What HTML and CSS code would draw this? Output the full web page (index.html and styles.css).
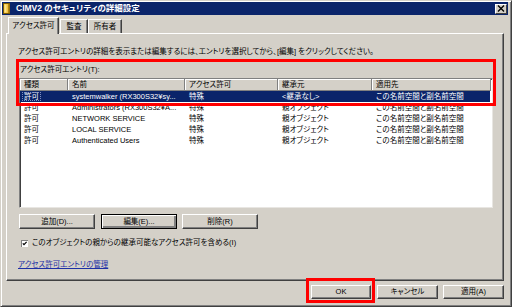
FILE: index.html
```html
<!DOCTYPE html>
<html lang="ja">
<head>
<meta charset="utf-8">
<title>CIMV2 のセキュリティの詳細設定</title>
<link rel="stylesheet" href="styles.css">
</head>
<body>
<div class="window">
  <div class="titlebar">
    <svg class="ticon" width="8" height="11" viewBox="0 0 8 11">
      <rect x="0.5" y="0.5" width="6" height="10" fill="#f3c13a" stroke="#7a5a00"/>
      <rect x="1.5" y="1.5" width="2" height="8" fill="#fbe38a"/>
      <rect x="5" y="1" width="1.5" height="9" fill="#b08418"/>
    </svg>
    <span class="title">CIMV2 のセキュリティの詳細設定</span>
    <span class="close">
      <svg width="8" height="7" viewBox="0 0 8 7"><path d="M1 0.5 L7 6.5 M7 0.5 L1 6.5" stroke="#000" stroke-width="1.4"/></svg>
    </span>
  </div>

  <div class="tabs">
    <div class="tab active">アクセス許可</div>
    <div class="tab t2">監査</div>
    <div class="tab t3">所有者</div>
  </div>

  <div class="panel">
    <p class="desc">アクセス許可エントリの詳細を表示または編集するには、エントリを選択してから、[編集] をクリックしてください。</p>
    <div class="label">アクセス許可エントリ(T):</div>
    <div class="list">
      <div class="row head">
        <span>種類</span><span>名前</span><span>アクセス許可</span><span>継承元</span><span>適用先</span>
      </div>
      <div class="row sel">
        <span><i class="focus">許可</i></span><span>systemwalker (RX300S32¥sy...</span><span>特殊</span><span>&lt;継承なし&gt;</span><span>この名前空間と副名前空間</span>
      </div>
      <div class="row">
        <span>許可</span><span>Administrators (RX300S32¥A...</span><span>特殊</span><span>親オブジェクト</span><span>この名前空間と副名前空間</span>
      </div>
      <div class="row">
        <span>許可</span><span>NETWORK SERVICE</span><span>特殊</span><span>親オブジェクト</span><span>この名前空間と副名前空間</span>
      </div>
      <div class="row">
        <span>許可</span><span>LOCAL SERVICE</span><span>特殊</span><span>親オブジェクト</span><span>この名前空間と副名前空間</span>
      </div>
      <div class="row">
        <span>許可</span><span>Authenticated Users</span><span>特殊</span><span>親オブジェクト</span><span>この名前空間と副名前空間</span>
      </div>
    </div>
    <div class="btnrow">
      <button class="btn">追加(D)...</button>
      <button class="btn default">編集(E)...</button>
      <button class="btn">削除(R)</button>
    </div>
    <div class="check">
      <svg width="7" height="7" viewBox="0 0 7 7">
        <rect x="0" y="0" width="7" height="7" fill="#808080"/>
        <rect x="1" y="1" width="6" height="6" fill="#fff"/>
        <path d="M1.8 3.3 L3 4.6 L5.6 1.9" stroke="#000" stroke-width="1.2" fill="none"/>
      </svg>
      <span>このオブジェクトの親からの継承可能なアクセス許可を含める(I)</span>
    </div>
    <a class="link">アクセス許可エントリの管理</a>
    <div class="mark mark-entries"></div>
  </div>

  <div class="footer">
    <div class="okwrap">
      <button class="btn fbtn">OK</button>
      <div class="mark mark-ok"></div>
    </div>
    <button class="btn fbtn">キャンセル</button>
    <button class="btn fbtn">適用(A)</button>
  </div>
</div>
</body>
</html>
```

FILE: styles.css
```css
* { box-sizing: border-box; }
html, body { margin: 0; padding: 0; }
body {
  width: 512px;
  height: 307px;
  overflow: hidden;
  background: #d4d0c8;
  font-family: "Liberation Sans", "Noto Sans CJK JP", sans-serif;
  font-size: 7.5px;
  color: #000;
  font-feature-settings: "palt";
}

.window {
  width: 512px;
  height: 307px;
  border: 1px solid;
  border-color: #d4d0c8 #404040 #404040 #d4d0c8;
  box-shadow: inset 1px 1px #fff, inset -1px -1px #808080;
  padding: 1px 3px 1px 1px;
  display: flex;
  flex-direction: column;
}

.titlebar {
  height: 13px;
  background: #0a246a;
  display: flex;
  align-items: center;
  padding: 0 1px 0 1px;
  color: #fff;
}
.ticon { margin-right: 5px; flex: none; }
.title {
  flex: 1;
  font-weight: bold;
  font-size: 8.5px;
  line-height: 13px;
  white-space: nowrap;
}
.close {
  width: 12px;
  height: 10px;
  background: #d4d0c8;
  border: 1px solid;
  border-color: #fff #404040 #404040 #fff;
  display: flex;
  align-items: center;
  justify-content: center;
}

.tabs {
  display: flex;
  align-items: flex-end;
  height: 16px;
  margin: 2px 0 0 6px;
}
.tab {
  height: 14px;
  line-height: 13px;
  text-align: center;
  background: #d4d0c8;
  border-top: 1px solid #fff;
  border-left: 1px solid #fff;
  border-right: 1px solid #404040;
  box-shadow: inset -1px 0 #808080;
  white-space: nowrap;
}
.tab.active {
  width: 51px;
  height: 17px;
  margin-bottom: -1px;
  line-height: 15px;
  position: relative;
  z-index: 1;
}
.tab.t2 { width: 28px; margin-left: 1px; }
.tab.t3 { width: 34px; }

.panel {
  position: relative;
  margin: 0 4px 0 4px;
  border: 1px solid;
  border-color: #fff #404040 #404040 #fff;
  box-shadow: inset -1px -1px #808080;
  padding: 13px 10px 10px 12px;
}

.desc {
  margin: 0 0 0 -1px;
  height: 10px;
  line-height: 10px;
  white-space: nowrap;
}
.label {
  margin: 8px 0 0 1px;
  height: 10px;
  line-height: 10px;
}

.list {
  margin-top: 3px;
  height: 130px;
  background: #fff;
  border: 1px solid;
  border-color: #808080 #e8e6e2 #e8e6e2 #808080;
  box-shadow: inset 1px 1px #404040;
}
.row {
  display: grid;
  grid-template-columns: 48px 117px 93px 94px 1fr;
  height: 11px;
  line-height: 11px;
}
.row span {
  padding-left: 4px;
  white-space: nowrap;
  overflow: hidden;
}
.row.head {
  height: 12px;
  margin-right: 1px;
}
.row.head span {
  background: #d4d0c8;
  border-right: 1px solid #808080;
  border-bottom: 1px solid #808080;
  box-shadow: inset 1px 1px #fff;
}
.row.sel {
  background: #0a246a;
  color: #fff;
  margin-right: 2px;
}
.focus {
  font-style: normal;
  margin-left: -2px;
  padding: 0 2px;
  outline: 1px dotted #7f8fc0;
  outline-offset: -1px;
}

.btnrow {
  display: flex;
  gap: 6px;
  margin-top: 6px;
}
.btn {
  font: inherit;
  color: #000;
  height: 15px;
  width: 76px;
  padding: 0;
  line-height: 13px;
  text-align: center;
  background: #d4d0c8;
  border: 1px solid;
  border-color: #fff #404040 #404040 #fff;
  box-shadow: inset -1px -1px #808080;
  white-space: nowrap;
}
.btn.default {
  border-color: #000;
  box-shadow: inset 1px 1px #fff, inset -2px -2px #808080;
}
.btnrow .btn:last-child { margin-left: -1px; }

.check {
  display: flex;
  align-items: center;
  gap: 4px;
  height: 10px;
  line-height: 10px;
  margin: 9px 0 0 2px;
  white-space: nowrap;
}
.check svg { flex: none; }

.link {
  display: block;
  margin: 12px 0 0 -1px;
  height: 10px;
  line-height: 10px;
  color: #1c2fa6;
  text-decoration: underline;
  width: max-content;
}

.footer {
  display: flex;
  justify-content: flex-end;
  gap: 5px;
  margin-top: 4px;
  padding-right: 4px;
}
.fbtn { width: 61px; height: 14px; line-height: 12px; }
.okwrap { position: relative; margin-right: 1px; }
.okwrap .fbtn { width: 60px; }

.mark {
  position: absolute;
  border: 3px solid #ff0000;
  pointer-events: none;
}
.mark-entries {
  left: 9px;
  top: 25px;
  width: 480px;
  height: 47px;
}
.mark-ok {
  left: -5px;
  top: -7px;
  right: -4px;
  bottom: -4px;
}
```
